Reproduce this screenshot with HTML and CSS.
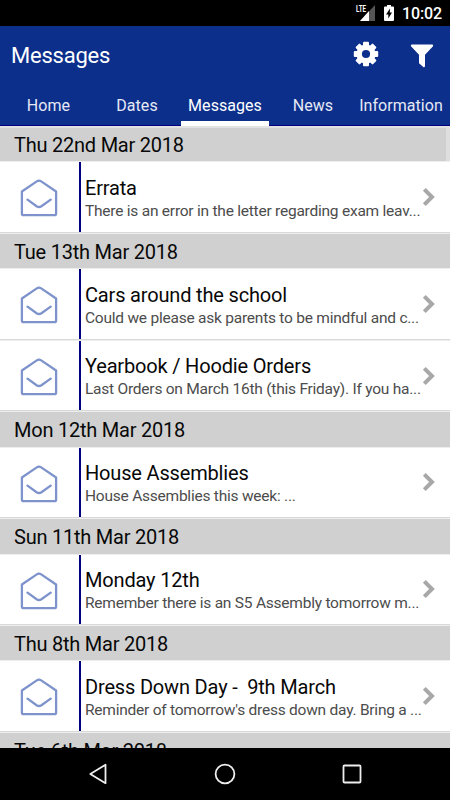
FILE: index.html
```html
<!DOCTYPE html>
<html lang="en">
<head>
<meta charset="utf-8">
<title>Messages</title>
<link rel="stylesheet" href="styles.css">
</head>
<body>
<svg class="defs" width="0" height="0">
  <symbol id="mail" viewBox="0 0 38 38"><path d="M1.9 12.5 16.8 2.4q2.2-1.4 4.4 0L36.1 12.5V34.4q0 1.8-1.8 1.8H3.7q-1.8 0-1.8-1.8ZM7.5 20.6l9.1 6.6q2.4 1.6 4.8 0l9.3-6.6"/></symbol>
  <symbol id="chevron" viewBox="0 0 14 20"><path d="M2.3 2.3 10 10l-7.7 7.7"/></symbol>
</svg>
<div class="screen">
  <div class="status">
    <svg class="signal" width="21" height="18" viewBox="0 0 21 18"><path class="dim" d="M20 0v16H5z"/><path class="lit" d="M14 6v10H5z"/><path class="gap" d="M0 0h12v8H0z"/><text x="1" y="6.6" textLength="10" lengthAdjust="spacingAndGlyphs">LTE</text></svg>
    <svg class="battery" width="10" height="16" viewBox="0 0 10 16"><path class="lit" d="M3 0h4v1.5h2q1 0 1 1V15q0 1-1 1H1q-1 0-1-1V2.5q0-1 1-1h2z"/><path class="gap" d="M6 3.5 2 9.5h2.3v4L8 7.5H5.8z"/></svg>
    <time>10:02</time>
  </div>
  <header class="appbar">
    <div class="titlebar">
      <h1>Messages</h1>
      <svg class="gear" width="26" height="26" viewBox="-13 -13 26 26"><g><rect id="tooth" x="-3" y="-12.2" width="6" height="24.4" rx="1"/><use href="#tooth" transform="rotate(45)"/><use href="#tooth" transform="rotate(90)"/><use href="#tooth" transform="rotate(135)"/><circle r="9.6"/></g><circle class="hub" r="4.1"/></svg>
      <svg class="filter" width="24" height="24" viewBox="0 0 24 24"><path d="M1.5.5h21q1.3.8.3 2L15 10.7v11.6q-.5 1.4-1.7.6L9 19.3v-8.6L1.2 2.5Q.2 1.3 1.5.5z"/></svg>
    </div>
    <nav class="tabs">
      <a class="home">Home</a><a class="dates">Dates</a><a class="messages active">Messages</a><a class="news">News</a><a class="info">Information</a>
    </nav>
  </header>
  <main class="list">
    <i class="scrollbar"></i>
    <h2>Thu 22nd Mar 2018</h2>
    <article class="row"><div class="icon"><svg><use href="#mail"/></svg></div><div class="body"><h3>Errata</h3><p>There is an error in the letter regarding exam leav...</p></div><svg class="chev"><use href="#chevron"/></svg></article>
    <h2>Tue 13th Mar 2018</h2>
    <article class="row"><div class="icon"><svg><use href="#mail"/></svg></div><div class="body"><h3>Cars around the school</h3><p>Could we please ask parents to be mindful and c...</p></div><svg class="chev"><use href="#chevron"/></svg></article>
    <article class="row"><div class="icon"><svg><use href="#mail"/></svg></div><div class="body"><h3>Yearbook / Hoodie Orders</h3><p>Last Orders on March 16th (this Friday). If you ha...</p></div><svg class="chev"><use href="#chevron"/></svg></article>
    <h2>Mon 12th Mar 2018</h2>
    <article class="row"><div class="icon"><svg><use href="#mail"/></svg></div><div class="body"><h3>House Assemblies</h3><p>House Assemblies this week: ...</p></div><svg class="chev"><use href="#chevron"/></svg></article>
    <h2>Sun 11th Mar 2018</h2>
    <article class="row"><div class="icon"><svg><use href="#mail"/></svg></div><div class="body"><h3>Monday 12th</h3><p>Remember there is an S5 Assembly tomorrow m...</p></div><svg class="chev"><use href="#chevron"/></svg></article>
    <h2>Thu 8th Mar 2018</h2>
    <article class="row"><div class="icon"><svg><use href="#mail"/></svg></div><div class="body"><h3>Dress Down Day -&nbsp; 9th March</h3><p>Reminder of tomorrow's dress down day. Bring a ...</p></div><svg class="chev"><use href="#chevron"/></svg></article>
    <h2>Tue 6th Mar 2018</h2>
  </main>
  <footer class="navbar">
    <svg viewBox="0 0 22 22"><path d="M17.5 1.8v18.4L2.3 11z"/></svg>
    <svg viewBox="0 0 22 22"><circle cx="11" cy="11" r="9.4"/></svg>
    <svg viewBox="0 0 22 22"><rect x="2.5" y="2.5" width="17" height="17" rx="1"/></svg>
  </footer>
</div>
</body>
</html>
```
FILE: styles.css
```css
* { box-sizing: border-box; }
body { margin: 0; font-family: Roboto, "Liberation Sans", sans-serif; }
h1, h2, h3, p { margin: 0; font-weight: 400; white-space: nowrap; }
.defs { position: absolute; }
.screen { width: 450px; height: 800px; display: flex; flex-direction: column; overflow: hidden; background: #fff; }

.status { flex: 0 0 26px; background: #000; color: #fff; display: flex; justify-content: flex-end; align-items: flex-start; padding: 5px 9px 0 0; }
.status time { font-size: 16px; line-height: 18px; font-weight: 500; width: 39px; margin-left: 8px; white-space: nowrap; letter-spacing: -.15px; }
.signal { margin-right: 8px; overflow: visible; }
.signal text { font: 700 9px Roboto, sans-serif; fill: #fff; }
.lit { fill: #fff; }
.dim { fill: #555; }
.gap { fill: #000; }

.appbar { flex: 0 0 100px; background: #0c2f8c; border-bottom: 1px solid #000080; color: #fff; }
.titlebar { height: 59px; display: flex; align-items: center; padding: 0 16px 0 11px; }
.titlebar h1 { flex: 1; font-size: 22px; letter-spacing: -.22px; }
.titlebar svg { fill: #fff; }
.gear { margin: 0 31px 3px 0; }
.hub { fill: #0c2f8c; }
.tabs { display: grid; grid-template: 41px / 93px 88px 88px 88px 93px; height: 40px; text-align: center; font-size: 16px; letter-spacing: .05px; }
.tabs a { line-height: 41px; white-space: nowrap; color: #e6e9f4; }
.tabs .home { padding-left: 4px; }
.tabs .info { padding-right: 5px; }
.tabs .active { color: #fff; border-bottom: 5px solid #fff; }

.list { flex: 1; min-height: 0; overflow: hidden; position: relative; }
.scrollbar { position: absolute; right: 0; top: 2px; width: 4px; height: 33px; background: #dedede; }
.list h2 { height: 35.4px; background: #d0d0d0; border-top: 1px solid #eee; padding-left: 14px; font-size: 20px; line-height: 36px; color: #080808; letter-spacing: -.23px; }
.list .scrollbar + h2 { border-top: 2px solid #e2e2e2; line-height: 35px; }
.row { height: 71.5px; display: flex; align-items: center; border-top: 1px solid #eee; border-bottom: 1px solid #d8d8d8; }
.icon { width: 81px; height: 100%; border-right: 2px solid #000080; padding: 17px 0 0 20.5px; }
.icon svg { display: block; width: 38px; height: 38px; margin-left: -.4px; fill: none; stroke: #7e93cc; stroke-width: 2.3; stroke-linejoin: round; stroke-linecap: round; }
.body { width: 339px; height: 100%; padding: 13.5px 0 0 4px; }
.body h3 { font-size: 20px; line-height: 25px; color: #080808; letter-spacing: -.17px; }
.body p { font-size: 15.5px; line-height: 21px; color: #4c4c4c; letter-spacing: -.23px; }
.chev { width: 14px; height: 20px; margin-left: 1.5px; fill: none; stroke: #a8a8a8; stroke-width: 4; }

.navbar { flex: 0 0 52px; background: #000; display: flex; align-items: center; justify-content: center; gap: 104.5px; }
.navbar svg { width: 22px; height: 22px; fill: none; stroke: #eee; stroke-width: 1.8; stroke-linejoin: round; }
```
